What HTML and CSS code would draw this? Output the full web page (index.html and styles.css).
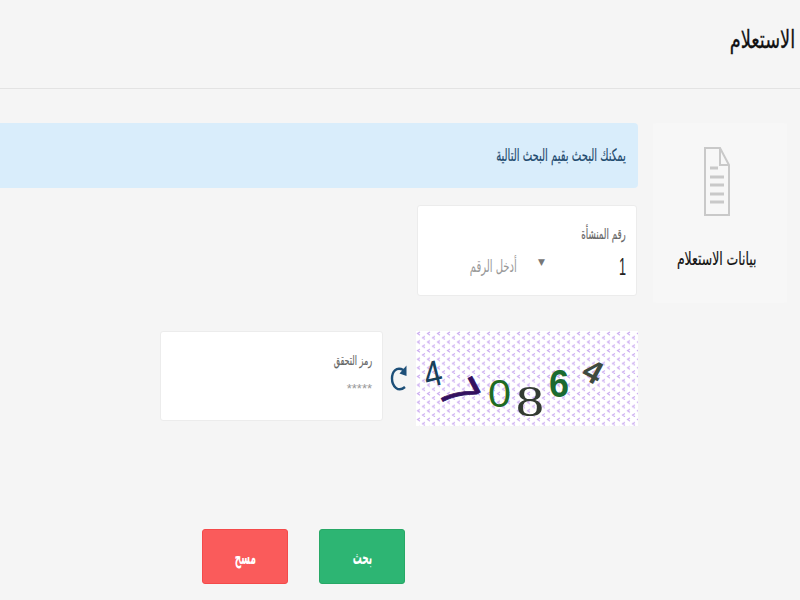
FILE: index.html
```html
<!DOCTYPE html>
<html lang="ar" dir="rtl">
<head>
    <meta charset="UTF-8">
    <meta name="viewport" content="width=device-width, initial-scale=1.0">
    <title>الاستعلام</title>
    <link rel="stylesheet" href="styles.css">
</head>
<body>
    <header class="page-header">
        <h1 class="page-title">الاستعلام</h1>
    </header>

    <div class="page-body">
        <aside class="side-card">
            <svg class="doc-icon" width="26" height="70" viewBox="0 0 26 70" aria-hidden="true">
                <path d="M1 1H16L25 18V68H1Z M16 1V18H25" fill="none" stroke="#c9c9c9" stroke-width="2"/>
                <path d="M6 21H14 M6 30H20 M6 38H20 M6 47H20 M6 55H20" fill="none" stroke="#c9c9c9" stroke-width="3"/>
            </svg>
            <div class="side-label">بيانات الاستعلام</div>
        </aside>

        <main class="main-col">
            <div class="alert-box"><span class="alert-text">يمكنك البحث بقيم البحث التالية</span></div>

            <div class="field-card number-card">
                <div class="field-label number-label">رقم المنشأة</div>
                <div class="number-row">
                    <span class="number-value">1</span>
                    <span class="number-arrow">▼</span>
                    <span class="number-hint">أدخل الرقم</span>
                </div>
            </div>

            <div class="captcha-row">
                <svg class="captcha-img" width="222" height="95" viewBox="0 0 222 95" role="img" aria-label="captcha">
                    <defs>
                        <pattern id="captchaDots" width="10" height="8.6" patternUnits="userSpaceOnUse">
                            <path d="M4 1L1.500 2.500L4 4" fill="none" stroke="#c9a9f0" stroke-width="1.100"/>
                            <path d="M9 5.300L6.500 6.800L9 8.300" fill="none" stroke="#c9a9f0" stroke-width="1.100"/>
                        </pattern>
                    </defs>
                    <rect width="222" height="95" fill="#fff"/>
                    <rect width="222" height="95" fill="url(#captchaDots)"/>
                    <text class="captcha-digit" transform="translate(11 57) rotate(-14) scale(.9 1)" fill="#17405a">4</text>
                    <text class="captcha-digit heavy" transform="translate(22 61) rotate(62) scale(1.1 1.5)" fill="#33105f">7</text>
                    <text class="captcha-digit" transform="translate(72 76) scale(1.15 1.1)" fill="#1f6b23">0</text>
                    <text class="captcha-digit serif" transform="translate(100 85) scale(1.55 1.25)" fill="#333b33">8</text>
                    <text class="captcha-digit bold" transform="translate(133 66) scale(1 1.1)" fill="#1b6a30">6</text>
                    <text class="captcha-digit bold small" transform="translate(164 46) rotate(28)" fill="#3f4a3f">4</text>
                </svg>
                <svg class="refresh-icon" width="18" height="28" viewBox="0 0 18 28" aria-hidden="true">
                    <path d="M13.500 6C6 2 2 8 2 14.500C2 22 8 29 15 23" fill="none" stroke="#1d4f78" stroke-width="2.400"/>
                    <path d="M9.500 9.500L16.500 12L16.500 1.500Z" fill="#1d4f78"/>
                </svg>
                <div class="field-card code-card">
                    <div class="field-label code-label">رمز التحقق</div>
                    <div class="code-hint">*****</div>
                </div>
            </div>

            <div class="button-row">
                <button class="btn btn-search"><span class="btn-text">بحث</span></button>
                <button class="btn btn-clear"><span class="btn-text">مسح</span></button>
            </div>
        </main>
    </div>
</body>
</html>
```

FILE: styles.css
```css
html, body {
    height: 100%;
}
body {
    margin: 0;
    overflow: hidden;
    background-color: #f5f5f5;
    font-family: "DejaVu Sans", sans-serif;
    color: #111;
}
/* the arabic text in the design is tall and narrow */
.page-title,
.side-label,
.alert-text,
.field-label,
.number-value,
.number-hint,
.btn-text {
    display: inline-block;
    transform-origin: right center;
}
.page-header {
    height: 88px;
    border-bottom: 1px solid #e3e3e3;
    padding-right: 5px;
    display: flex;
    align-items: center;
}
.page-title {
    margin: 0 0 9px;
    font-size: 25px;
    font-weight: normal;
    color: #111;
    -webkit-text-stroke: .3px #111;
    transform: scaleX(.71);
}
.page-body {
    display: flex;
    gap: 15px;
    padding: 34px 13px 0 0;
}
.side-card {
    flex: none;
    width: 134px;
    height: 180px;
    box-sizing: border-box;
    padding: 24px 6px 0 0;
    background-color: #f7f7f7;
    border-radius: 3px;
    text-align: center;
}
.doc-icon {
    display: block;
    margin: 0 auto;
}
.side-label {
    margin-top: 31px;
    font-size: 18px;
    color: #111;
    -webkit-text-stroke: .2px #111;
    white-space: nowrap;
    transform-origin: center;
    transform: scaleX(.69);
}
.main-col {
    flex: none;
    width: 680px;
}
.alert-box {
    height: 65px;
    box-sizing: border-box;
    padding: 0 12px 2px;
    display: flex;
    align-items: center;
    background-color: #d9edfb;
    border-radius: 4px;
}
.alert-text {
    font-size: 17px;
    color: #1f4a6e;
    -webkit-text-stroke: .2px #1f4a6e;
    white-space: nowrap;
    transform: scaleX(.59);
}
.field-card {
    background-color: #fff;
    border: 1px solid #ececec;
    border-radius: 3px;
    box-sizing: border-box;
    padding: 18px 10px 0;
}
.number-card {
    width: 220px;
    height: 91px;
    margin-top: 17px;
    margin-right: 1px;
}
.field-label {
    font-size: 14px;
    color: #666;
    -webkit-text-stroke: .2px #666;
    white-space: nowrap;
    transform: scaleX(.62);
}
.number-row {
    display: flex;
    align-items: center;
    margin-top: 9px;
    height: 30px;
}
.number-value {
    width: 81px;
    font-family: "Liberation Sans", sans-serif;
    font-size: 23px;
    color: #222;
    transform: scaleX(.55);
}
.number-arrow {
    width: 28px;
    margin-top: -10px;
    font-size: 9px;
    color: #777;
}
.number-hint {
    margin-top: -2px;
    font-size: 17px;
    color: #999;
    white-space: nowrap;
    transform: scaleX(.59);
}
.captcha-row {
    display: flex;
    align-items: flex-start;
    margin-top: 35px;
}
.captcha-img {
    flex: none;
    display: block;
    direction: ltr;
}
.captcha-digit {
    font-family: "Liberation Sans", sans-serif;
    font-size: 36px;
}
.captcha-digit.serif {
    font-family: "Liberation Serif", serif;
}
.captcha-digit.bold {
    font-weight: bold;
}
.captcha-digit.heavy {
    stroke: #33105f;
    stroke-width: .7px;
}
.captcha-digit.small {
    font-size: 32px;
}
.refresh-icon {
    flex: none;
    margin: 33px 8px 0 7px;
}
.code-card {
    width: 223px;
    height: 90px;
}
.code-label {
    font-size: 13.5px;
    transform: scaleX(.6);
}
.code-hint {
    margin-top: 12px;
    font-family: "Liberation Sans", sans-serif;
    font-size: 13px;
    color: #999;
}
.button-row {
    display: flex;
    gap: 31px;
    margin-top: 103px;
    margin-right: 233px;
}
.btn {
    width: 86px;
    height: 55px;
    border-radius: 3px;
    font-family: inherit;
    color: #fff;
    cursor: pointer;
}
.btn-text {
    font-size: 19px;
    font-weight: bold;
    transform-origin: center;
    transform: scaleX(.47);
}
.btn-search {
    background-color: #2db573;
    border: 1px solid #27a866;
}
.btn-clear {
    background-color: #fa5b5b;
    border: 1px solid #f44a4a;
}
```
